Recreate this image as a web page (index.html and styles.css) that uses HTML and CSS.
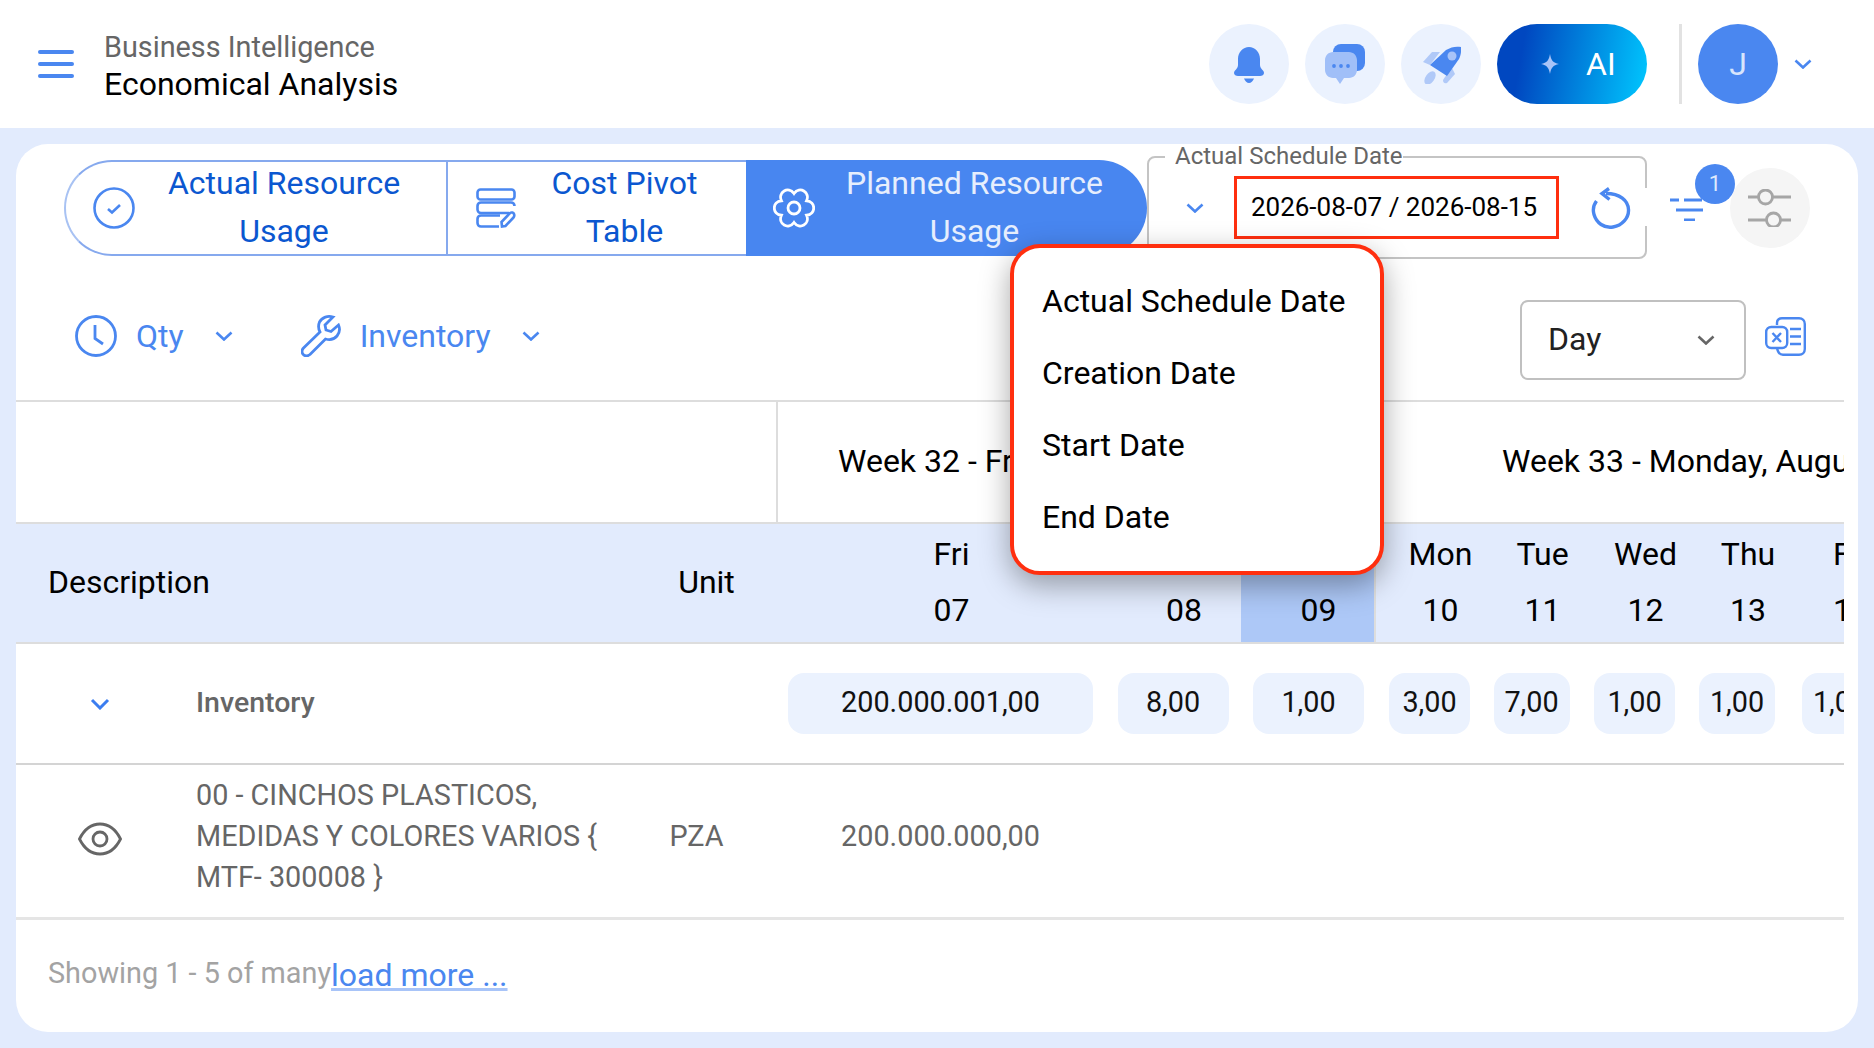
FILE: index.html
```html
<!DOCTYPE html>
<html>

<head>
    <meta charset="utf-8">
    <title>Economical Analysis</title>
    <link rel="stylesheet" href="styles.css">
</head>

<body>
    <header class="topbar">
        <div class="burger"><span></span><span></span><span></span></div>
        <div class="titles">
            <div class="crumb">Business Intelligence</div>
            <div class="page-title">Economical Analysis</div>
        </div>
        <div class="top-actions">
            <div class="round-btn">
                <svg width="40" height="40" viewBox="0 0 40 40">
                    <path fill="#4a87f0" d="M20 3C26 3 31 8 31 15V21C31 25 35 26 35 29C35 31 33 32 31 32H9C7 32 5 31 5 29C5 26 9 25 9 21V15C9 8 14 3 20 3Z"/>
                    <path fill="#4a87f0" d="M15 34.5H25C24 37 22 39 20 39C18 39 16 37 15 34.5Z"/>
                </svg>
            </div>
            <div class="round-btn">
                <svg width="40" height="40" viewBox="0 0 40 40">
                    <rect x="8" y="0" width="32" height="27" rx="8" fill="#4a87f0"/>
                    <path fill="#a0bff8" d="M8 8H24C28.400 8 32 11.600 32 16V26C32 30.400 28.400 34 24 34H19L15 40L11 34H8C3.600 34 0 30.400 0 26V16C0 11.600 3.600 8 8 8Z"/>
                    <circle cx="9" cy="22" r="1.900" fill="#4a87f0"/>
                    <circle cx="16" cy="22" r="1.900" fill="#4a87f0"/>
                    <circle cx="23" cy="22" r="1.900" fill="#4a87f0"/>
                </svg>
            </div>
            <div class="round-btn">
                <svg width="40" height="40" viewBox="0 0 40 40">
                    <path fill="#b0c9f8" d="M2 18L11 8H19L9 21Z"/>
                    <path fill="#b0c9f8" d="M31 24L34 30L26 39C23 40 22 38 22 36L24 33Z"/>
                    <ellipse cx="9" cy="34" rx="7.500" ry="4.500" transform="rotate(-55 9 34)" fill="#b0c9f8"/>
                    <path fill="#4a87f0" d="M9 21L25 6C30 3 35 2 40 3C40.500 8 39.500 12 38 15L26 32Z"/>
                    <circle cx="31" cy="12" r="4.500" fill="#a9c4f8"/>
                </svg>
            </div>
            <div class="ai-btn">
                <svg width="18" height="20" viewBox="0 0 18 20"><path fill="#a9c4f8" d="M9 0C10 6 12 9 18 10C12 11 10 14 9 20C8 14 6 11 0 10C6 9 8 6 9 0Z"/></svg>
                <span>AI</span>
            </div>
            <div class="top-sep"></div>
            <div class="avatar">J</div>
            <svg class="avatar-chev" width="18" height="10" viewBox="0 0 18 10"><path d="M1.500 1.500L9 8.500L16.500 1.500" fill="none" stroke="#4a87f0" stroke-width="2.600"/></svg>
        </div>
    </header>

    <main class="card">
        <div class="toolbar">
            <div class="tabs">
                <div class="tab tab-first">
                    <svg width="42" height="42" viewBox="0 0 42 42" fill="none" stroke="#4a87f0" stroke-width="2.600">
                        <circle cx="21" cy="21" r="19.500"/>
                        <path d="M15 22L19 25.500L27 18"/>
                    </svg>
                    <div class="tab-text">Actual Resource Usage</div>
                </div>
                <div class="tab">
                    <svg width="40" height="40" viewBox="0 0 40 40" fill="none" stroke="#4a87f0" stroke-width="2.600">
                        <rect x="1.500" y="1.500" width="37" height="10" rx="3"/>
                        <path d="M33 25H5C3 25 1.500 23.500 1.500 21.500V18C1.500 16 3 14.500 5 14.500H35C37 14.500 38.500 16 38.500 18"/>
                        <path d="M23 38.500H5C3 38.500 1.500 37 1.500 35V31C1.500 29 3 27.500 5 27.500H24"/>
                        <path d="M26 38.500L25.500 34L34 25C35.500 24 37.500 24.500 38 26C38.500 27.500 38.500 28.500 37.500 29.500L29.500 38Z"/>
                    </svg>
                    <div class="tab-text">Cost Pivot Table</div>
                </div>
                <div class="tab tab-active">
                    <svg class="gear" width="42" height="42" viewBox="-1 -1 42 42" fill="none" stroke="#fff" stroke-width="2.800">
                        <path d="M32.560 27.250C36.500 36 25.600 42.300 20 34.500C14.400 42.300 3.500 36 7.440 27.250C-2.100 26.300 -2.100 13.700 7.440 12.750C3.500 4 14.400 -2.300 20 5.500C25.600 -2.300 36.500 4 32.560 12.750C42.100 13.700 42.100 26.300 32.560 27.250Z"/>
                        <circle cx="20" cy="20" r="6"/>
                    </svg>
                    <div class="tab-text">Planned Resource Usage</div>
                </div>
            </div>

            <div class="date-field">
                <span class="date-legend">Actual Schedule Date</span>
                <svg class="date-chev" width="18" height="10" viewBox="0 0 18 10"><path d="M1.500 1.500L9 8.500L16.500 1.500" fill="none" stroke="#4a87f0" stroke-width="2.600"/></svg>
                <div class="date-range">2026-08-07 / 2026-08-15</div>
                <svg class="date-reset" width="40" height="44" viewBox="0 0 40 44" fill="none" stroke="#4a87f0" stroke-width="3.400">
                    <path d="M5.500 14C2.500 18 1.700 23 3 27.500C5.500 36 13 41.500 22 40C31 38.500 38 31 37.500 22.500C37 13.500 29 6.500 15 6.500"/>
                    <path d="M18 1.500L11 6.500L18.500 12.500"/>
                </svg>
            </div>

            <div class="filter-btn">
                <svg width="36" height="24" viewBox="0 0 36 24" fill="none" stroke="#4a87f0" stroke-width="3.200">
                    <path d="M0 3H9M14 3H32M6 13H33M14 23H25"/>
                </svg>
                <span class="filter-badge">1</span>
            </div>
            <div class="sliders-btn">
                <svg width="44" height="38" viewBox="0 0 44 38" fill="none" stroke="#a6a6a6" stroke-width="2.800">
                    <path d="M0 8H10M25 8H43M0 31H18M33 31H43"/>
                    <circle cx="17.500" cy="8" r="7"/>
                    <circle cx="25.500" cy="31" r="7"/>
                </svg>
            </div>
        </div>

        <div class="filters">
            <div class="filter-item">
                <svg width="42" height="42" viewBox="0 0 42 42" fill="none" stroke="#4a87f0" stroke-width="2.800">
                    <circle cx="21" cy="21" r="19.500"/>
                    <path d="M20 10V23.500L28 29"/>
                </svg>
                <span>Qty</span>
                <svg class="chev" width="18" height="10" viewBox="0 0 18 10"><path d="M1.500 1.500L9 8.500L16.500 1.500" fill="none" stroke="#4a87f0" stroke-width="2.600"/></svg>
            </div>
            <div class="filter-item">
                <svg width="40" height="42" viewBox="0 0 40 42" fill="none" stroke="#4a87f0" stroke-width="2.800">
                    <path d="M32 2C27 0.500 21 2 18.500 7C17 10.500 17.500 14 19 17L2.500 33C0.500 35 0.500 38 2.500 39.700C4.500 41.500 7 41 9 39.500L24.500 24C28 25 33 24.500 36 21C38.500 18 39 13.500 37.500 10L30 16.500L25 15L24 10Z"/>
                </svg>
                <span>Inventory</span>
                <svg class="chev" width="18" height="10" viewBox="0 0 18 10"><path d="M1.500 1.500L9 8.500L16.500 1.500" fill="none" stroke="#4a87f0" stroke-width="2.600"/></svg>
            </div>
            <div class="period-select">
                <span>Day</span>
                <svg width="18" height="10" viewBox="0 0 18 10"><path d="M1.500 1.500L9 8.500L16.500 1.500" fill="none" stroke="#666" stroke-width="2.600"/></svg>
            </div>
            <svg class="excel" width="41" height="39" viewBox="0 0 41 39" fill="none" stroke="#4a87f0" stroke-width="2.400">
                <path d="M12 8V6C12 3 14 1.200 17 1.200H34C37.500 1.200 39.800 3.500 39.800 7V32C39.800 35.500 37.500 37.800 34 37.800H18C15 37.800 13 36 12 31"/>
                <rect x="1.200" y="10" width="21" height="21" rx="5"/>
                <path d="M7.500 16L16 25M16 16L7.500 25"/>
                <path d="M25 12H36M25 19.500H36M25 27H36"/>
            </svg>
        </div>

        <div class="table-wrap">
            <table class="grid">
                <colgroup>
                    <col class="c-toggle"><col class="c-desc"><col class="c-unit">
                    <col class="c-d1"><col class="c-d2"><col class="c-d3">
                    <col class="c-d4"><col class="c-d5"><col class="c-d6"><col class="c-d7"><col class="c-d8">
                </colgroup>
                <thead>
                    <tr class="week-row">
                        <th colspan="3"></th>
                        <th colspan="3" class="week week-32">Week 32 - Friday, August 07</th>
                        <th colspan="5" class="week week-33">Week 33 - Monday, August 10</th>
                    </tr>
                    <tr class="day-row">
                        <th colspan="2" class="head-desc">Description</th>
                        <th class="day">Unit</th>
                        <th class="day">Fri<br>07</th>
                        <th class="day">Sat<br>08</th>
                        <th class="day today">Sun<br>09</th>
                        <th class="day">Mon<br>10</th>
                        <th class="day">Tue<br>11</th>
                        <th class="day">Wed<br>12</th>
                        <th class="day">Thu<br>13</th>
                        <th class="day">Fri<br>14</th>
                    </tr>
                </thead>
                <tbody>
                    <tr class="group-row">
                        <td class="toggle"><svg width="20" height="12" viewBox="0 0 20 12"><path d="M2 2L10 10L18 2" fill="none" stroke="#3b7df0" stroke-width="3"/></svg></td>
                        <td class="group-name">Inventory</td>
                        <td></td>
                        <td class="num"><span class="chip chip-lg">200.000.001,00</span></td>
                        <td class="num"><span class="chip chip-md">8,00</span></td>
                        <td class="num"><span class="chip chip-md">1,00</span></td>
                        <td class="num"><span class="chip chip-sm">3,00</span></td>
                        <td class="num"><span class="chip chip-xs">7,00</span></td>
                        <td class="num"><span class="chip chip-sm">1,00</span></td>
                        <td class="num"><span class="chip chip-xs">1,00</span></td>
                        <td class="num"><span class="chip chip-xs">1,00</span></td>
                    </tr>
                    <tr class="item-row">
                        <td class="toggle eye-cell">
                            <svg width="44" height="34" viewBox="0 0 44 34" fill="none" stroke="#666" stroke-width="2.800">
                                <path d="M1.500 17C6 8 13 2 22 2C31 2 38 8 42.500 17C38 26 31 32 22 32C13 32 6 26 1.500 17Z"/>
                                <circle cx="22" cy="17" r="7"/>
                            </svg>
                        </td>
                        <td class="item-name">00 - CINCHOS PLASTICOS, MEDIDAS Y COLORES VARIOS { MTF- 300008 }</td>
                        <td class="item-unit">PZA</td>
                        <td class="item-val">200.000.000,00</td>
                        <td colspan="7"></td>
                    </tr>
                </tbody>
            </table>
        </div>

        <div class="pager">
            <span class="pager-count">Showing 1 - 5 of many</span><a class="pager-more" href="#">load more ...</a>
        </div>

        <ul class="date-menu">
            <li>Actual Schedule Date</li>
            <li>Creation Date</li>
            <li>Start Date</li>
            <li>End Date</li>
        </ul>
    </main>
</body>

</html>
```

FILE: styles.css
```css
* {
    box-sizing: border-box;
}

body {
    margin: 0;
    background: #e2ebfd;
    font-family: Roboto, "Liberation Sans", sans-serif;
    color: #000;
}

svg {
    flex: none;
    display: block;
}

/* top bar */
.topbar {
    display: flex;
    align-items: center;
    height: 128px;
    background: #fff;
    padding: 0 0 0 38px;
}

.burger {
    display: flex;
    flex-direction: column;
    gap: 7.500px;
    width: 36px;
}

.burger span {
    height: 4.500px;
    border-radius: 3px;
    background: #4a87f0;
}

.titles {
    margin-left: 30px;
    padding-top: 3px;
}

.crumb {
    font-size: 28.800px;
    line-height: 36px;
    color: #666;
}

.page-title {
    font-size: 32px;
    line-height: 38px;
}

.top-actions {
    display: flex;
    align-items: center;
    margin-left: auto;
    gap: 16px;
    padding-right: 62px;
}

.round-btn {
    display: flex;
    align-items: center;
    justify-content: center;
    width: 80px;
    height: 80px;
    border-radius: 50%;
    background: #ebf2fe;
}

.ai-btn {
    display: flex;
    align-items: center;
    width: 150px;
    height: 80px;
    padding-left: 44px;
    gap: 27px;
    border-radius: 40px;
    background: linear-gradient(100deg, #0047c0 18%, #00c8ff 100%);
    color: #fff;
    font-size: 32px;
}

.top-sep {
    width: 3px;
    height: 80px;
    margin-left: 16px;
    background: #e2e2e2;
}

.avatar {
    display: flex;
    align-items: center;
    justify-content: center;
    width: 80px;
    height: 80px;
    border-radius: 50%;
    background: #4a87f0;
    color: #d8e5fc;
    font-size: 32px;
}

/* card */
.card {
    position: relative;
    margin: 16px 16px 16px 16px;
    height: 888px;
    padding: 12px 14px 0 0;
    border-radius: 32px;
    background: #fff;
}

.toolbar {
    display: flex;
    align-items: flex-start;
    padding-left: 48px;
}

.tabs {
    display: flex;
    margin-top: 4px;
    height: 96px;
    font-size: 32px;
    line-height: 48px;
    color: #0b57d0;
}

.tab {
    display: flex;
    align-items: center;
    width: 300px;
    padding: 0 13px 0 28px;
    border: 2px solid #86a9ee;
    border-right: 0;
}

.tab-first {
    width: 382px;
    padding-left: 27px;
    border-radius: 48px 0 0 48px;
    border-left-color: #a8c2f3;
}

.tab-active {
    width: 401px;
    padding-left: 27px;
    border: 0;
    border-radius: 0 48px 48px 0;
    background: #4886f0;
    color: #e6eefd;
}

.tab-text {
    flex: 1;
    margin-top: -2px;
    text-align: center;
}

.date-field {
    position: relative;
    display: flex;
    align-items: center;
    width: 500px;
    height: 103px;
    padding-left: 37px;
    border: 2px solid #c4c4c4;
    border-radius: 8px;
}

.date-field::after {
    content: "";
    position: absolute;
    right: -2px;
    top: 30px;
    width: 2px;
    height: 38px;
    background: #fff;
}

.date-legend {
    position: absolute;
    left: 16px;
    top: -14px;
    padding: 0 0 0 10px;
    background: #fff;
    font-size: 24px;
    line-height: 24px;
    color: #666;
}

.date-range {
    width: 325px;
    height: 63px;
    margin-left: 30px;
    padding-right: 5px;
    border: 3px solid #ff2f0f;
    font-size: 26px;
    line-height: 57px;
    text-align: center;
}

.date-reset {
    margin: 2px 0 0 32px;
}

.filter-btn {
    position: relative;
    width: 60px;
    height: 80px;
    padding-top: 41px;
    margin: 0 0 0 23px;
}

.filter-badge {
    position: absolute;
    left: 25px;
    top: 8px;
    width: 40px;
    height: 40px;
    border-radius: 50%;
    background: #4a87f0;
    color: #dfeafd;
    font-size: 22px;
    line-height: 40px;
    text-align: center;
    z-index: 1;
}

.sliders-btn {
    display: flex;
    align-items: center;
    justify-content: center;
    width: 80px;
    height: 80px;
    margin: 12px 0 0 0;
    border-radius: 50%;
    background: #f5f5f5;
}

.filters {
    display: flex;
    align-items: center;
    margin-top: 41px;
    padding: 0 38px 20px 59px;
    border-bottom: 2px solid #ddd;
    font-size: 32px;
    color: #4a87f0;
}

.filter-item {
    display: flex;
    align-items: center;
    gap: 19px;
    margin: 0 68px 9px 0;
}

.filter-item .chev {
    margin-left: 12px;
}

.period-select {
    display: flex;
    align-items: center;
    justify-content: space-between;
    width: 226px;
    height: 80px;
    margin-left: auto;
    padding: 0 29px 0 26px;
    border: 2px solid #c0c0c0;
    border-radius: 8px;
    color: #222;
}

.period-select span {
    margin-top: -2px;
}

.excel {
    margin: 0 0 8px 19px;
}

/* table */
.table-wrap {
    overflow: hidden;
}

.grid {
    table-layout: fixed;
    width: 1879px;
    border-collapse: separate;
    border-spacing: 0;
    font-size: 32px;
}

.c-toggle { width: 168px; }
.c-desc { width: 431px; }
.c-unit { width: 161px; }
.c-d1 { width: 329px; }
.c-d2 { width: 136px; }
.c-d3 { width: 135px; }
.c-d4 { width: 107px; }
.c-d5 { width: 97px; }
.c-d6 { width: 109px; }
.c-d7 { width: 96px; }
.c-d8 { width: 110px; }

th {
    font-weight: 400;
    padding: 0;
}

.week-row th {
    height: 122px;
    padding-bottom: 2px;
    border-bottom: 2px solid #ddd;
    white-space: nowrap;
    text-align: left;
}

.week-row .week-32 {
    padding-left: 60px;
    border-left: 2px solid #ddd;
}

.week-row .week-33 {
    padding-left: 124px;
    border-left: 2px solid #ddd;
}

.day-row th {
    height: 120px;
    padding-bottom: 2px;
    background: #e2ebfd;
    border-bottom: 2px solid #ddd;
    line-height: 56px;
    white-space: nowrap;
}

.head-desc {
    padding-left: 32px;
    text-align: left;
}

.day {
    padding-left: 22px;
    text-align: center;
}

.day-row .today {
    background: #adc8f7;
    border-right: 2px solid #ddd;
}

td {
    padding: 0;
    font-size: 28.800px;
}

.group-row td {
    height: 121px;
    border-bottom: 2px solid #d4d4d4;
}

.toggle svg {
    margin: 0 auto;
}

.group-row .group-name {
    padding: 0 0 2px 12px;
    font-size: 28.500px;
    font-weight: 500;
    color: #666;
}

.num {
    text-align: center;
    white-space: nowrap;
}

.chip {
    display: inline-block;
    height: 61px;
    border-radius: 16px;
    background: #ebf2fe;
    line-height: 59px;
    text-align: center;
    color: #111;
    vertical-align: middle;
}

.chip-lg { width: 305px; }
.chip-md { width: 111px; }
.chip-sm { width: 81px; }
.chip-xs { width: 76px; }

.item-row td {
    height: 155px;
    padding-bottom: 10px;
    border-bottom: 3px solid #e5e5e5;
    color: #666;
}

.item-row .eye-cell {
    padding-bottom: 5px;
}

.item-row .item-name {
    padding: 0 12px 10px;
    line-height: 41px;
}

.item-row .item-unit {
    padding-left: 2px;
    text-align: center;
}

.item-val {
    text-align: center;
}

.pager {
    padding: 29px 0 0 32px;
    line-height: 48px;
}

.pager-count {
    font-size: 28.800px;
    color: #a3a3a3;
    vertical-align: 3px;
}

.pager-more {
    font-size: 32px;
    color: #4a87f0;
    text-decoration-color: #a8c4f8;
}

/* dropdown over the date field */
.date-menu {
    position: absolute;
    left: 994px;
    top: 100px;
    width: 374px;
    height: 331px;
    margin: 0;
    padding: 17px 0 0 28px;
    list-style: none;
    border: 4px solid #ff2f0f;
    border-radius: 30px;
    background: #fff;
    box-shadow: 0 10px 30px rgba(0, 0, 0, .35);
    font-size: 32px;
    line-height: 72px;
}
```
